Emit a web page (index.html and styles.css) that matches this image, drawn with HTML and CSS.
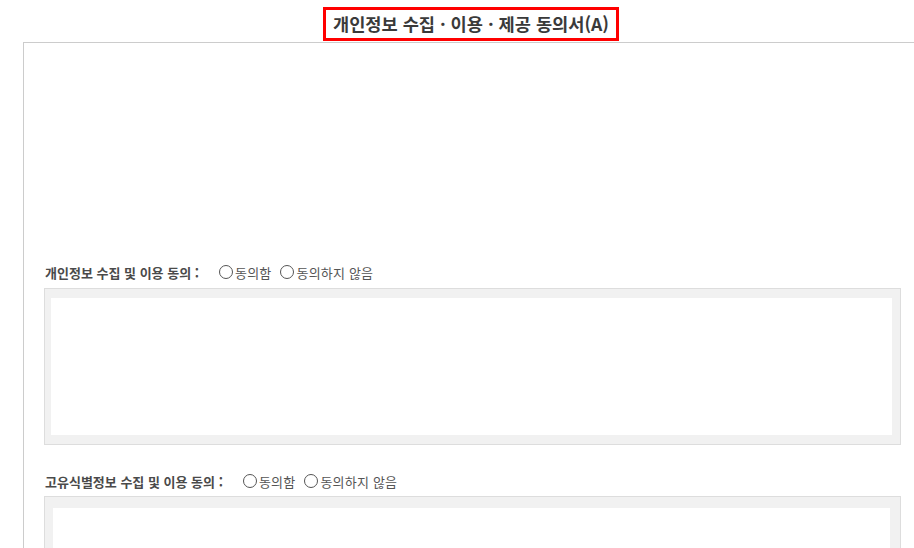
FILE: index.html
```html
<!DOCTYPE html>
<html lang="ko">
<head>
<meta charset="utf-8">
<title>개인정보 수집 · 이용 · 제공 동의서(A)</title>
<link rel="stylesheet" href="styles.css">
</head>
<body>
<div class="title-wrap">
  <h1 class="title">개인정보 수집 · 이용 · 제공 동의서(A)</h1>
</div>
<div class="panel">
  <div class="intro"></div>
  <section class="agree">
    <div class="agree-row">
      <span class="agree-label">개인정보 수집 및 이용 동의 :</span>
      <label class="opt"><span class="radio"></span>동의함</label>
      <label class="opt"><span class="radio"></span>동의하지 않음</label>
    </div>
    <div class="terms"><div class="terms-inner"></div></div>
  </section>
  <section class="agree agree-second">
    <div class="agree-row">
      <span class="agree-label">고유식별정보 수집 및 이용 동의 :</span>
      <label class="opt"><span class="radio"></span>동의함</label>
      <label class="opt"><span class="radio"></span>동의하지 않음</label>
    </div>
    <div class="terms terms-b"><div class="terms-inner"></div></div>
  </section>
</div>
</body>
</html>
```
FILE: styles.css
```css
html, body {
  margin: 0;
  padding: 0;
  background: #fff;
  overflow: hidden;
}
body {
  font-family: "Noto Sans CJK KR", "Noto Sans", sans-serif;
  color: #444;
  height: 548px;
}
.title-wrap {
  text-align: center;
  padding-top: 7px;
  height: 35px;
  padding-left: 28px;
}
.title {
  display: inline-block;
  margin: 0;
  border: 3px solid #ff0000;
  padding: 0 7px;
  height: 28px;
  line-height: 27px;
  font-size: 17.6px;
  font-weight: 700;
  color: #3a3a3a;
  letter-spacing: 0;
}
.panel {
  margin-left: 23px;
  border-top: 1px solid #cccccc;
  border-left: 1px solid #cccccc;
  padding: 0 13px 0 20px;
  height: 505px;
  overflow: hidden;
}
.intro {
  height: 219px;
}
.agree-row {
  display: flex;
  align-items: center;
  height: 20px;
  font-size: 13px;
  padding-left: 1px;
}
.agree-label {
  font-weight: 700;
  color: #4a4a4a;
  margin-right: 20px;
}
.opt {
  display: inline-flex;
  align-items: center;
  color: #555;
  margin-right: 9px;
  letter-spacing: 0.2px;
}
.radio {
  width: 12px;
  height: 12px;
  border: 1px solid #555;
  border-radius: 50%;
  margin-right: 2px;
  background: #fff;
}
.terms {
  margin-top: 6px;
  border: 1px solid #dddddd;
  background: #f1f1f1;
  padding: 9px 8px 9px 6px;
}
.terms-inner {
  background: #fff;
  height: 137px;
}
.agree-second {
  margin-top: 26px;
}
.terms-b {
  margin-top: 5px;
  padding: 11px 10px 9px 8px;
}
```
